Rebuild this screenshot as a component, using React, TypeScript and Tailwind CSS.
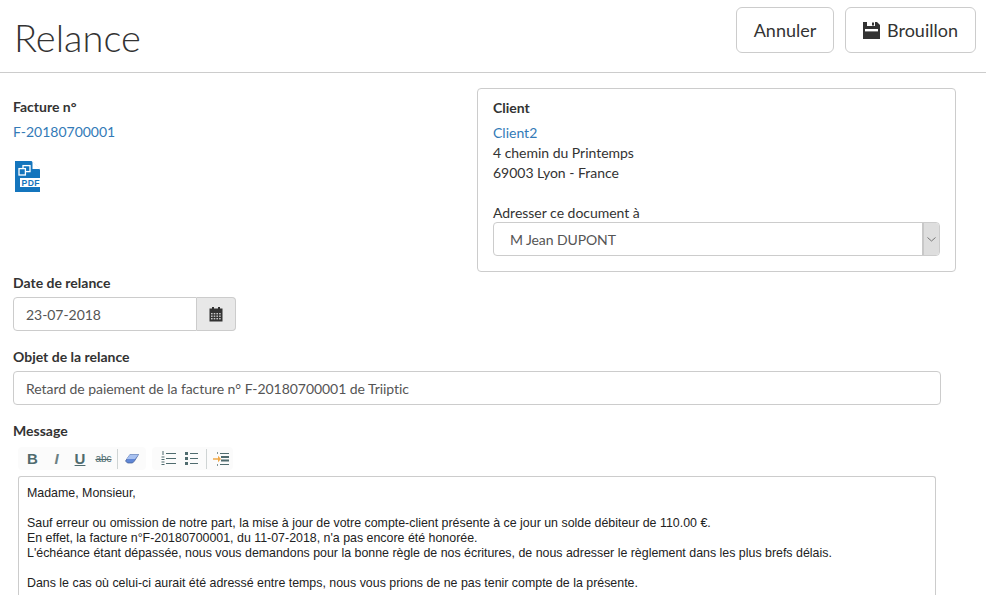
import React from "react";

function Sep() {
  return <span className="h-[20px] w-px bg-[#cfd4d4]" />;
}

function PdfIcon() {
  return (
    <svg width="26" height="31" viewBox="0 0 26 31" className="block">
      <path d="M1 0H17.5L26 8.5V31H1Z" fill="#1475bd" />
      <path d="M18.5 0.5L26 8H18.5Z" fill="#ffffff" />
      <rect x="9" y="4.6" width="7" height="6" fill="none" stroke="#fff" strokeWidth="1.3" />
      <rect x="5" y="7.6" width="6.4" height="6.4" fill="#1475bd" stroke="#fff" strokeWidth="1.3" />
      <rect x="6" y="17" width="20" height="9" fill="#fff" />
      <text x="7.6" y="25" fontFamily="'Liberation Sans',sans-serif" fontWeight="700" fontSize="8.6" fill="#1475bd" letterSpacing="0.4">PDF</text>
    </svg>
  );
}

function SaveIcon() {
  return (
    <svg width="17" height="17" viewBox="0 0 17 17" className="block">
      <path d="M0 0H14L17 3V17H0Z" fill="#333" />
      <rect x="4" y="0" width="8" height="4" fill="#fff" />
      <rect x="9" y="0.5" width="2" height="3" fill="#333" />
      <rect x="2" y="7" width="13" height="2.4" fill="#fff" />
    </svg>
  );
}

function CalendarIcon() {
  return (
    <svg width="14" height="15" viewBox="0 0 14 15" className="block">
      <rect x="3" y="0" width="2" height="3" fill="#333" />
      <rect x="9" y="0" width="2" height="3" fill="#333" />
      <rect x="0.5" y="1.5" width="13" height="13" fill="#333" />
      <g fill="#c9c9c9">
        {[6, 8.5, 11].map((y) =>
          [2, 4.7, 7.4, 10.1].map((x) => <rect key={`${x}-${y}`} x={x} y={y} width="1.6" height="1.4" />)
        )}
      </g>
    </svg>
  );
}

function Toolbar() {
  const c = "#4f6b6e";
  return (
    <div className="ml-[18px] mt-[6px] flex h-[23px] items-center gap-[6px]">
      <div className="flex h-[23px] w-[128px] items-center rounded-[4px] bg-[#fbfbfb] pl-[9px]">
        <span className="w-[11px] text-center font-['Liberation_Sans'] text-[15px] font-bold leading-none text-[#4f6b6e]">B</span>
        <span className="ml-[14px] w-[9px] text-center font-['Liberation_Sans'] text-[15px] font-bold italic leading-none text-[#6b8083]">I</span>
        <span className="ml-[13px] w-[12px] text-center font-['Liberation_Sans'] text-[15px] font-bold leading-none text-[#4f6b6e] underline">U</span>
        <span className="ml-[9px] w-[17px] text-center font-['Liberation_Sans'] text-[10px] leading-none text-[#4f6b6e] line-through">abc</span>
        <span className="ml-[5px] flex items-center gap-[7px]">
          <Sep />
          <svg width="14" height="11" viewBox="0 0 14 11">
            <path d="M0.5 8L5 1.5H13.5L9.5 8L7.5 10H2.5Z" fill="#5f86d6" stroke="#40598e" strokeWidth="0.7" />
            <path d="M5 1.5H13.5L10 6H1.5Z" fill="#a8c1f0" />
          </svg>
        </span>
      </div>
      <div className="flex h-[23px] w-[81px] items-center rounded-[4px] bg-[#fbfbfb] pl-[9px]">
        <svg width="15" height="15" viewBox="0 0 15 15">
          <g fill={c}>
            <rect x="5" y="2" width="10" height="1" /><rect x="5" y="7" width="10" height="1" /><rect x="5" y="12" width="10" height="1" />
            <rect x="1.5" y="0" width="1" height="4" /><rect x="0.5" y="5.5" width="3" height="1" /><rect x="0.5" y="8" width="3" height="1" /><rect x="0.5" y="10.5" width="3" height="1" /><rect x="0.5" y="13" width="3" height="1" />
          </g>
        </svg>
        <svg width="13" height="14" viewBox="0 0 13 14" className="ml-[9px]">
          <g fill={c}>
            <rect x="0" y="0" width="3" height="3" /><rect x="0" y="5" width="3" height="3" /><rect x="0" y="10" width="3" height="3" />
            <rect x="5" y="1" width="8" height="1" /><rect x="5" y="6" width="8" height="1" /><rect x="5" y="11" width="8" height="1" />
          </g>
        </svg>
        <span className="ml-[8px] flex items-center gap-[6px]">
          <Sep />
          <svg width="16" height="14" viewBox="0 0 16 14">
            <g fill={c}>
              <rect x="7" y="1" width="9" height="1" />
              <rect x="8" y="4" width="8" height="2" />
              <rect x="8" y="7.5" width="8" height="2" />
              <rect x="7" y="12" width="9" height="1" />
              <rect x="4" y="0" width="1" height="2" opacity="0.7" />
              <rect x="4" y="12" width="1" height="2" opacity="0.7" />
            </g>
            <path d="M0 6.2H5V3.8L8 7L5 10.2V7.8H0Z" fill="#f0a94a" />
          </svg>
        </span>
      </div>
    </div>
  );
}

export default function App() {
  return (
    <div className="h-[595px] w-[986px] overflow-hidden bg-white font-['Lato',sans-serif] text-[14px] text-[#333]">
      <header className="flex h-[73px] items-start justify-between border-b border-[#cccccc] pl-[14px] pr-[10px]">
        <h1 className="mt-[14px] text-[38px] font-light leading-[46px] text-[#333]">Relance</h1>
        <div className="mt-[7px] flex gap-[11px]">
          <button className="h-[46px] w-[98px] rounded-[6px] border border-[#cccccc] bg-white text-[18px] text-[#333]">Annuler</button>
          <button className="flex h-[46px] w-[131px] items-center justify-center gap-[7px] rounded-[6px] border border-[#cccccc] bg-white text-[18px] text-[#333]">
            <SaveIcon />
            Brouillon
          </button>
        </div>
      </header>

      <div className="flex pl-[13px] pr-[30px] pt-[15px]">
        <div className="w-[464px]">
          <div className="mt-[9px] font-bold leading-[20px]">Facture n°</div>
          <a className="mt-[5px] block leading-[20px] text-[#337ab7]">F-20180700001</a>
          <div className="ml-[1px] mt-[19px]"><PdfIcon /></div>
        </div>
        <section className="h-[184px] w-[479px] rounded-[4px] border border-[#cccccc] px-[15px] pt-[9px]">
          <div className="font-bold leading-[20px]">Client</div>
          <a className="mt-[5px] block leading-[20px] text-[#337ab7]">Client2</a>
          <div className="leading-[20px] tracking-[-0.02px]">4 chemin du Printemps</div>
          <div className="leading-[20px] tracking-[-0.02px]">69003 Lyon - France</div>
          <div className="mt-[20px] leading-[19px] tracking-[-0.02px]">Adresser ce document à</div>
          <div className="flex h-[34px] w-[447px] items-stretch overflow-hidden rounded-[4px] border border-[#cccccc]">
            <div className="flex flex-1 items-center pl-[16px] tracking-[-0.1px] text-[#555]">M Jean DUPONT</div>
            <div className="flex w-[17px] items-center justify-center border-l-2 border-[#c8c8c8] bg-[#dedede]">
              <svg width="9" height="5" viewBox="0 0 9 5"><path d="M0.5 0.5L4.5 4L8.5 0.5" fill="none" stroke="#777" /></svg>
            </div>
          </div>
        </section>
      </div>

      <div className="pl-[13px]">
        <div className="mt-[1px] font-bold leading-[20px]">Date de relance</div>
        <div className="mt-[4px] flex h-[34px] w-[223px]">
          <div className="flex flex-1 items-center rounded-l-[4px] border border-[#cccccc] pl-[12px] tracking-[-0.05px] text-[#555]">23-07-2018</div>
          <div className="flex w-[39px] items-center justify-center rounded-r-[4px] border border-l-0 border-[#cccccc] bg-[#e8e8e8]">
            <CalendarIcon />
          </div>
        </div>
        <div className="mt-[16px] font-bold leading-[20px]">Objet de la relance</div>
        <div className="mt-[4px] flex h-[34px] w-[928px] items-center rounded-[4px] border border-[#cccccc] pl-[12px] tracking-[-0.05px] text-[#555]">
          Retard de paiement de la facture n° F-20180700001 de Triiptic
        </div>
        <div className="mt-[16px] font-bold leading-[20px]">Message</div>
      </div>

      <Toolbar />

      <div className="ml-[18px] mt-[6px] h-[140px] w-[918px] rounded-t-[3px] border border-b-0 border-[#cccccc] px-[8px] pt-[9px] font-['Liberation_Sans',sans-serif] text-[12.4px] leading-[15px] text-[#222]">
        <p>Madame, Monsieur,</p>
        <p className="mt-[15px]">Sauf erreur ou omission de notre part, la mise à jour de votre compte-client présente à ce jour un solde débiteur de 110.00 €.</p>
        <p>En effet, la facture n°F-20180700001, du 11-07-2018, n'a pas encore été honorée.</p>
        <p>L'échéance étant dépassée, nous vous demandons pour la bonne règle de nos écritures, de nous adresser le règlement dans les plus brefs délais.</p>
        <p className="mt-[15px]">Dans le cas où celui-ci aurait été adressé entre temps, nous vous prions de ne pas tenir compte de la présente.</p>
      </div>
    </div>
  );
}
